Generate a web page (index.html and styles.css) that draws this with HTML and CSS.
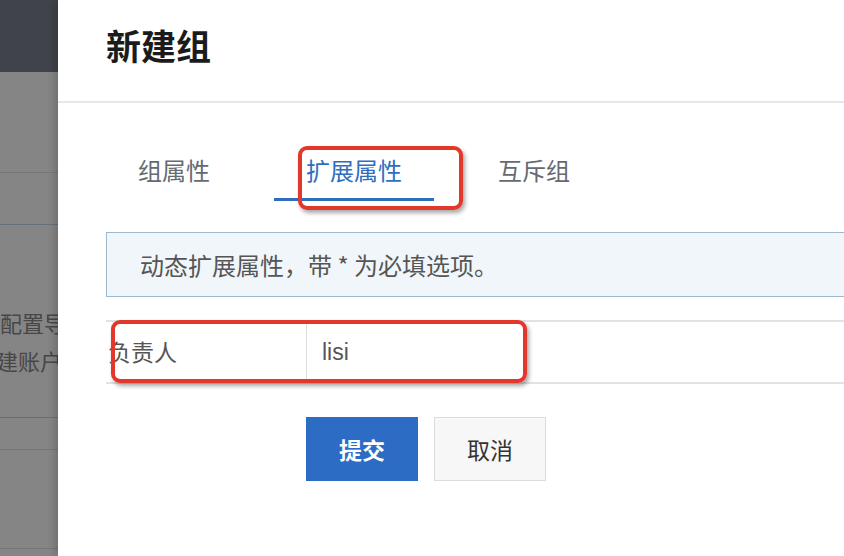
FILE: index.html
```html
<!DOCTYPE html>
<html lang="zh-CN">
<head>
    <meta charset="UTF-8">
    <title>新建组</title>
    <meta name="viewport" content="width=device-width, initial-scale=1.0">
    <link rel="stylesheet" href="styles.css">
</head>
<body>
    <aside class="backdrop">
        <div class="bd-top"></div>
        <div class="bd-row bd-a"></div>
        <div class="bd-row bd-b"></div>
        <div class="bd-row bd-c">
            <div class="bd-text">配置导航</div>
            <div class="bd-text shift">建账户</div>
        </div>
        <div class="bd-row bd-d"></div>
        <div class="bd-row bd-e"></div>
    </aside>

    <main class="panel">
        <div class="panel-head">
            <h1>新建组</h1>
        </div>
        <div class="panel-body">
            <div class="tabs">
                <div class="tab">组属性</div>
                <div class="tab active">扩展属性</div>
                <div class="tab">互斥组</div>
            </div>

            <div class="notice">动态扩展属性，带 * 为必填选项。</div>

            <div class="field">
                <div class="field-label">负责人</div>
                <div class="field-input"><input type="text" value="lisi"></div>
            </div>

            <div class="actions">
                <button class="btn primary">提交</button>
                <button class="btn">取消</button>
            </div>
        </div>
    </main>

    <!-- annotation marks drawn over the screenshot -->
    <div class="mark mark-tab"></div>
    <div class="mark mark-field"></div>
</body>
</html>
```

FILE: styles.css
```css
html, body {
    margin: 0;
    height: 100%;
}
body {
    display: flex;
    overflow: hidden;
    font-family: "Noto Sans CJK SC", "Noto Sans", sans-serif;
    background: #fff;
}

/* masked page behind the dialog */
.backdrop {
    width: 58px;
    flex: none;
    overflow: hidden;
    background: #858585;
}
.bd-top {
    height: 72px;
    background: #404349;
}
.bd-row {
    border-bottom: 1px solid #777;
}
.bd-a { height: 100px; }
.bd-b { height: 51px; border-bottom-color: #66707a; }
.bd-c {
    height: 193px;
    box-sizing: border-box;
    padding-top: 78px;
    border-bottom-color: #66707a;
}
.bd-d { height: 31px; }
.bd-e { height: 98px; }
.bd-text {
    white-space: nowrap;
    font-size: 22px;
    line-height: 38px;
    color: #474747;
}
.bd-text.shift {
    margin-left: -4px;
}

/* dialog */
.panel {
    flex: 1;
    min-width: 0;
    overflow: hidden;
    background: #fff;
    box-shadow: -3px 0 8px rgba(0, 0, 0, 0.18);
    position: relative;
}
.panel-head {
    height: 101px;
    border-bottom: 2px solid #e5e7e8;
}
.panel-head h1 {
    margin: 0;
    padding: 26px 0 0 48px;
    font-size: 35px;
    line-height: 38px;
    font-weight: 600;
    color: #1b1b1b;
}
.panel-body {
    padding-left: 48px;
}

.tabs {
    display: flex;
    gap: 32px;
    margin-top: 43px;
}
.tab {
    padding: 0 32px 4px;
    font-size: 24px;
    line-height: 48px;
    color: #666b72;
    border-bottom: 3px solid transparent;
}
.tab.active {
    color: #2f6ebf;
    border-bottom-color: #2f6ebf;
}

.notice {
    margin: 31px -4px 0 0;
    height: 63px;
    padding-left: 33px;
    border: 1px solid #9cb9cf;
    background: #f1f6fa;
    font-size: 24px;
    line-height: 63px;
    color: #555;
    white-space: nowrap;
}

.field {
    display: flex;
    margin-top: 23px;
    height: 60px;
    border-top: 2px solid #e0e3e6;
    border-bottom: 2px solid #e0e3e6;
}
.field-label {
    width: 200px;
    padding-left: 2px;
    box-sizing: border-box;
    font-size: 23px;
    line-height: 58px;
    color: #555;
}
.field-input {
    flex: 1;
    border-left: 1px solid #dcdfe2;
}
.field-input input {
    width: 100%;
    height: 60px;
    box-sizing: border-box;
    border: none;
    outline: none;
    padding: 0 0 0 15px;
    font-family: "Liberation Sans", "Noto Sans CJK SC", sans-serif;
    font-size: 23px;
    color: #555;
    background: transparent;
}

.actions {
    display: flex;
    gap: 16px;
    margin-top: 33px;
    padding-left: 200px;
}
.btn {
    width: 112px;
    height: 64px;
    border: 1px solid #dcdcdc;
    background: #f7f7f7;
    font-family: "Noto Sans CJK SC", sans-serif;
    font-size: 23px;
    color: #333;
    padding: 0;
}
.btn.primary {
    border-color: #2d6cc4;
    background: #2d6cc4;
    color: #fff;
    font-weight: 700;
}

/* red annotation boxes */
.mark {
    position: absolute;
    border: 4px solid #e3372b;
    border-radius: 9px;
    box-shadow: 2px 3px 4px rgba(0, 0, 0, 0.35);
    box-sizing: border-box;
}
.mark-tab {
    left: 298px;
    top: 146px;
    width: 165px;
    height: 64px;
}
.mark-field {
    left: 111px;
    top: 320px;
    width: 416px;
    height: 63px;
}
```
